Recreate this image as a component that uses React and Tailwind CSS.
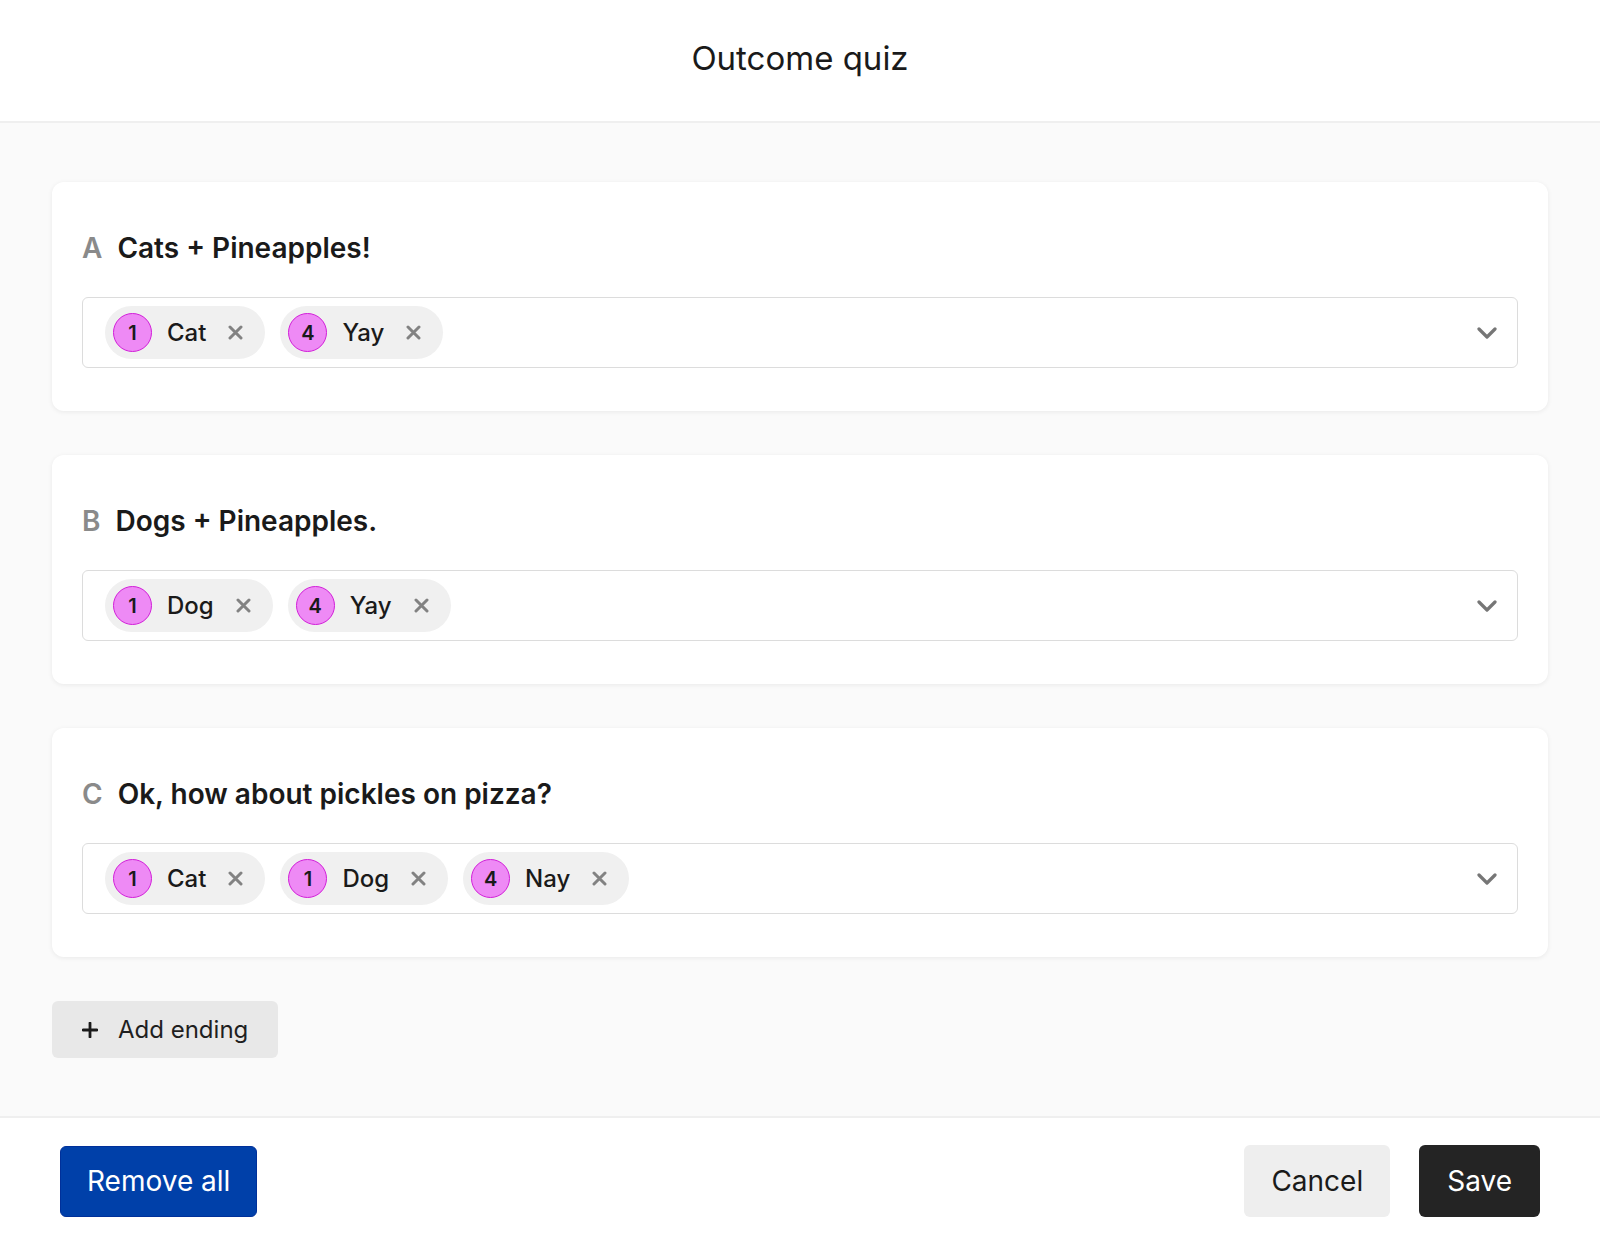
import React from 'react';

const endings = [
  {
    letter: 'A',
    title: 'Cats + Pineapples!',
    tags: [
      { score: 1, label: 'Cat' },
      { score: 4, label: 'Yay' },
    ],
  },
  {
    letter: 'B',
    title: 'Dogs + Pineapples.',
    tags: [
      { score: 1, label: 'Dog' },
      { score: 4, label: 'Yay' },
    ],
  },
  {
    letter: 'C',
    title: 'Ok, how about pickles on pizza?',
    tags: [
      { score: 1, label: 'Cat' },
      { score: 1, label: 'Dog' },
      { score: 4, label: 'Nay' },
    ],
  },
];

const CloseIcon = () => (
  <svg width="15" height="15" viewBox="0 0 15 15" fill="none">
    <path d="M2 2L13 13M13 2L2 13" stroke="#828282" strokeWidth="3" strokeLinecap="round" />
  </svg>
);

const Chevron = () => (
  <svg width="20" height="12" viewBox="0 0 20 12" fill="none">
    <path d="M2 2L10 10L18 2" stroke="#767676" strokeWidth="3.2" strokeLinecap="round" strokeLinejoin="round" />
  </svg>
);

const PlusIcon = () => (
  <svg width="16" height="16" viewBox="0 0 16 16" fill="none">
    <path d="M8 1V15M1 8H15" stroke="#1a1a1a" strokeWidth="2.8" strokeLinecap="round" />
  </svg>
);

const Tag = ({ score, label }) => (
  <div className="h-[53px] rounded-full bg-[#f0f0f0] pl-[8px] pr-[22px] flex items-center">
    <div className="w-[39px] h-[39px] rounded-full bg-[#ee8af5] border border-[#d21fd9] flex items-center justify-center text-[20px] font-semibold text-[#1a1a1a]">
      {score}
    </div>
    <span className="ml-[15px] text-[24px] font-medium text-[#1a1a1a]">{label}</span>
    <span className="ml-[22px] flex items-center">
      <CloseIcon />
    </span>
  </div>
);

const EndingCard = ({ letter, title, tags }) => (
  <div className="bg-white rounded-[12px] shadow-[0_1px_5px_rgba(0,0,0,0.07)] pt-[46px] pb-[43px] px-[30px]">
    <div className="flex items-center gap-[15px] h-[39px] text-[28px] font-semibold">
      <span className="text-[#8a8a8a]">{letter}</span>
      <span className="text-[#1a1a1a]">{title}</span>
    </div>
    <div className="mt-[30px] h-[71px] border border-[#dcdcdc] rounded-[6px] pl-[22px] pr-[20px] flex items-center">
      <div className="flex-1 flex items-center gap-[15px]">
        {tags.map((t, i) => (
          <Tag key={i} score={t.score} label={t.label} />
        ))}
      </div>
      <Chevron />
    </div>
  </div>
);

export default function App() {
  return (
    <div className="w-full h-[1244px] flex flex-col bg-white font-['Inter','Liberation_Sans',sans-serif]">
      {/* Header */}
      <div className="h-[123px] shrink-0 border-b-2 border-[#efefef] flex items-center justify-center pb-[4px]">
        <h1 className="text-[33px] text-[#1a1a1a]">Outcome quiz</h1>
      </div>

      {/* Endings */}
      <div className="flex-1 bg-[#fafafa] px-[52px] pt-[59px] flex flex-col">
        <div className="flex flex-col gap-[44px]">
          {endings.map((e) => (
            <EndingCard key={e.letter} {...e} />
          ))}
        </div>
        <div className="mt-[44px]">
          <button className="h-[57px] pl-[30px] pr-[30px] rounded-[6px] bg-[#e8e8e8] flex items-center gap-[20px] text-[24px] text-[#1f1f1f]">
            <PlusIcon />
            Add ending
          </button>
        </div>
      </div>

      {/* Footer */}
      <div className="h-[128px] shrink-0 border-t-2 border-[#efefef] px-[60px] flex items-center justify-between">
        <button className="h-[71px] px-[26px] rounded-[6px] bg-[#0040a9] border border-[#00309a] text-white text-[28px]">
          Remove all
        </button>
        <div className="flex items-center gap-[29px]">
          <button className="h-[72px] px-[27px] rounded-[6px] bg-[#eeeeee] text-[#1a1a1a] text-[28px]">
            Cancel
          </button>
          <button className="h-[72px] px-[28px] rounded-[6px] bg-[#242424] text-white text-[28px]">
            Save
          </button>
        </div>
      </div>
    </div>
  );
}
